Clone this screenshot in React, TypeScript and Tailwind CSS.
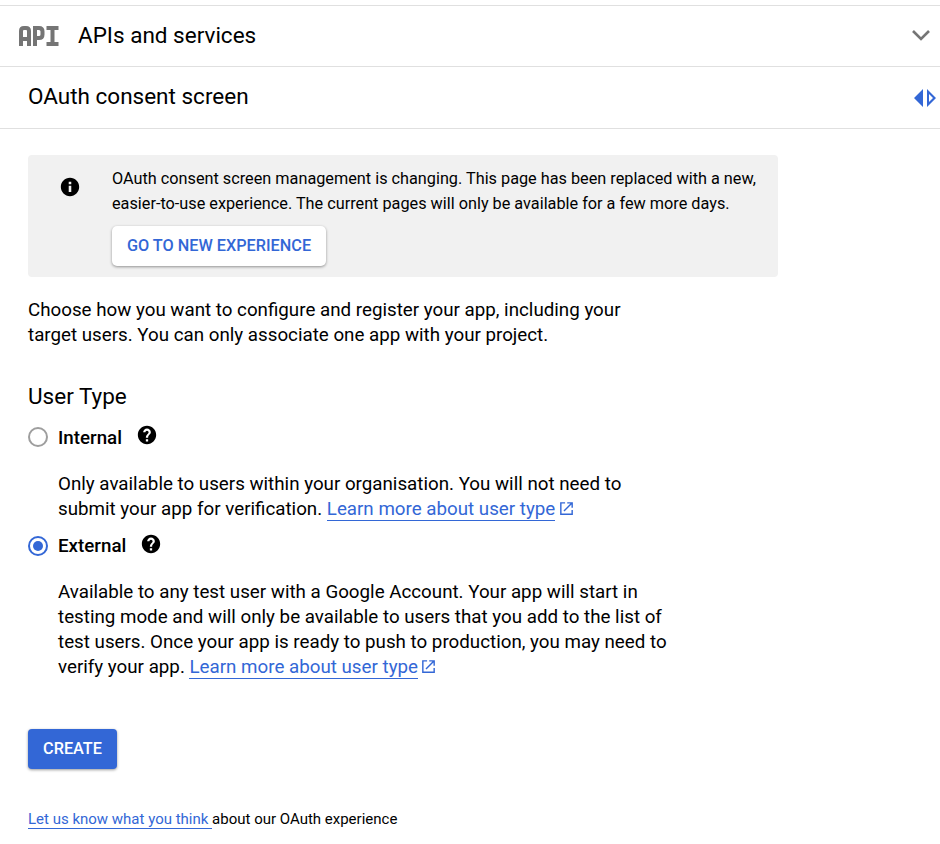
import React from 'react';

function Help() {
  return (
    <svg className="mb-1" width="22" height="22" viewBox="0 0 24 24" fill="#000">
      <path d="M12 2C6.48 2 2 6.48 2 12s4.48 10 10 10 10-4.48 10-10S17.52 2 12 2zm1.25 17h-2.5v-2.5h2.5V19zm1.82-7.75l-.9.92C13.45 12.9 13.25 13.5 13.25 15h-2.5v-.5c0-1.1.45-2.1 1.17-2.83l1.24-1.26c.37-.36.59-.86.59-1.41 0-.9-.8-1.7-1.75-1.7s-1.75.8-1.75 1.7H7.8c0-2.21 1.9-4.2 4.2-4.2s4.2 1.9 4.2 4.2c0 .88-.46 1.68-1.13 2.25z" />
    </svg>
  );
}

function LearnMore() {
  return (
    <>
      <a className="border-b border-[#3367d6] text-[#3367d6]">Learn more about user type</a>
      <svg className="ml-[2.5px] inline-block align-[-2px]" width="17" height="17" viewBox="0 0 24 24" fill="#3367d6">
        <path d="M19 19H5V5h5V3H3v18h18v-7h-2v5zM13 3v2h4.59l-9.83 9.83 1.41 1.41L19 6.41V11h2V3h-8z" />
      </svg>
    </>
  );
}

export default function App() {
  return (
    <div className="h-[844px] w-[940px] overflow-hidden bg-white pt-[5px] font-['Roboto',sans-serif] text-black">
      <header className="flex h-[62px] items-center border-y border-[#e0e0e0] pl-[19px] pr-[10px]">
        <svg width="40" height="20" viewBox="0 0 40 20" fill="none" stroke="#757575" strokeWidth="4">
          <path d="M2 20V5q0-3 3-3h2q3 0 3 3v15M2 13h8M16 20V2h4q3.5 0 3.5 3.5v3q0 3.5-3.5 3.5h-4M27.5 2h12M27.5 18h12M33.5 2v16" />
        </svg>
        <h1 className="mb-[2px] ml-[19px] text-[22.5px] leading-7">APIs and services</h1>
        <svg className="mb-[2px] ml-auto" width="18" height="12" viewBox="0 0 18 12" fill="none" stroke="#757575" strokeWidth="2.6"><path d="M1 2l8 8 8-8" /></svg>
      </header>
      <div className="flex h-[62px] items-center border-b border-[#e0e0e0] pl-7 pr-[3px]">
        <h2 className="mb-1 text-[22.5px] leading-7">OAuth consent screen</h2>
        <svg className="ml-auto" width="24" height="20" viewBox="0 0 24 20" fill="#3367d6"><path d="M10 1v18L1 10zM14 1v18l9-9zM16 6l4 4-4 4z" fillRule="evenodd" /></svg>
      </div>
      <main className="px-7 pt-[26px]">
        <section className="flex h-[122px] w-[750px] rounded-[4px] bg-[#f1f1f1] pl-[31px] pt-[11px]">
          <svg className="mt-[10px]" width="22" height="22" viewBox="0 0 24 24"><path d="M12 2C6.48 2 2 6.48 2 12s4.48 10 10 10 10-4.48 10-10S17.52 2 12 2zm1.4 15.5h-2.8v-7h2.8v7zm0-8.5h-2.8V6.4h2.8V9z" /></svg>
          <div className="ml-[31px] text-[16.25px] leading-[25px]">
            <p>OAuth consent screen management is changing. This page has been replaced with a new,<br />easier-to-use experience. The current pages will only be available for a few more days.</p>
            <button className="mt-[10px] h-10 w-[214px] rounded-[5px] bg-white pb-[2px] font-medium text-[#3367d6] shadow-[0_1px_3px_rgba(0,0,0,.4)]">GO TO NEW EXPERIENCE</button>
          </div>
        </section>
        <p className="mt-[21px] text-[18.75px] leading-[25px]">Choose how you want to configure and register your app, including your<br />target users. You can only associate one app with your project.</p>
        <h3 className="mt-[34px] text-[22.5px] leading-7">User Type</h3>
        <div className="mt-3 flex h-[30px] items-center text-[18.75px] font-medium">
          <span className="h-5 w-5 rounded-full border-2 border-[#9e9e9e]" />
          <span className="ml-[10px] mr-[14px] pt-[2px]">Internal</span><Help />
        </div>
        <p className="ml-[30px] mt-5 text-[18.75px] leading-[25px]">Only available to users within your organisation. You will not need to<br />submit your app for verification. <LearnMore /></p>
        <div className="mt-[9px] flex h-[30px] items-center text-[18.75px] font-medium">
          <span className="flex h-5 w-5 items-center justify-center rounded-full border-2 border-[#3367d6]"><span className="h-[10px] w-[10px] rounded-full bg-[#3367d6]" /></span>
          <span className="ml-[10px] mr-[14px]">External</span><Help />
        </div>
        <p className="ml-[30px] mt-[19px] text-[18.75px] leading-[25px]">Available to any test user with a Google Account. Your app will start in<br />testing mode and will only be available to users that you add to the list of<br />test users. Once your app is ready to push to production, you may need to<br />verify your app. <LearnMore /></p>
        <button className="mt-[49px] block h-10 w-[89px] rounded-[4px] bg-[#3367d6] text-[16.25px] font-medium text-white shadow-[0_1px_3px_rgba(0,0,0,.4)]">CREATE</button>
        <p className="mt-[40px] text-[15px] leading-5"><a className="whitespace-pre border-b border-[#3367d6] text-[#3367d6]">Let us know what you think </a>about our OAuth experience</p>
      </main>
    </div>
  );
}
